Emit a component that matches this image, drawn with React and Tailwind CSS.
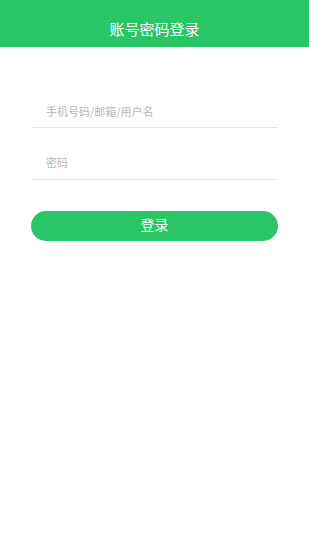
export default function App() {
  const font = { fontFamily: '"Noto Sans CJK SC", "Noto Sans", sans-serif' };
  return (
    <div className="w-[309px] h-[550px] bg-white" style={font}>
      <div className="h-[47px] bg-[#2ac566] flex items-center justify-center pt-[11px]">
        <span className="text-white text-[15px] leading-[20px]">账号密码登录</span>
      </div>
      <div className="px-[31px] pt-[48px]">
        <div className="h-[33px] flex items-center pl-[15px] border-b border-[#e5e5e5]">
          <span className="text-[11px] text-[#b8b8b8] leading-none">手机号码/邮箱/用户名</span>
        </div>
        <div className="h-[52px] flex items-end pb-[11px] pl-[15px] border-b border-[#e5e5e5]">
          <span className="text-[11px] text-[#b8b8b8] leading-none">密码</span>
        </div>
        <div className="mt-[31px] h-[30px] rounded-full bg-[#2ac566] flex items-center justify-center pb-[4px]">
          <span className="text-white text-[14px] leading-none">登录</span>
        </div>
      </div>
    </div>
  );
}
